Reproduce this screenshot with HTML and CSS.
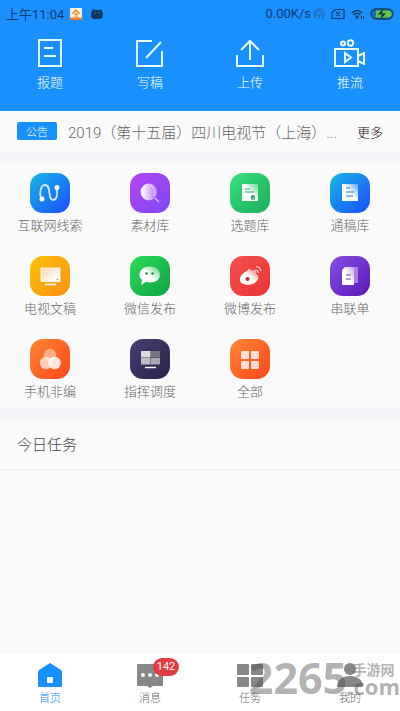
FILE: index.html
```html
<!DOCTYPE html>
<html lang="zh-CN">
<head>
    <meta charset="UTF-8">
    <meta name="viewport" content="width=device-width, initial-scale=1.0">
    <title>首页</title>
    <link rel="stylesheet" href="styles.css">
</head>
<body>
    <header class="header">
        <div class="status-bar">
            <span class="status-time">上午11:04</span>
            <svg width="12" height="12" viewBox="0 0 12 12"><rect width="12" height="12" rx="1" fill="#fdf0dc"/><path d="M2 6l4-4 4 4M4 6h4M5 8h3" fill="none" stroke="#e9963c" stroke-width="1.5"/><path d="M0 9.500h12V12H0z" fill="#f08030"/></svg>
            <svg class="status-android" width="14" height="12" viewBox="0 0 14 12"><path d="M2 3l1-2 2 1h4l2-1 1 2 1 3-1 4-3 1H4L1 9 1 5z" fill="#12365e"/><circle cx="5" cy="5" r=".7" fill="#1890ff"/><circle cx="9" cy="5" r=".7" fill="#1890ff"/></svg>
            <span class="status-speed">0.00K/s</span>
            <svg width="12" height="12" viewBox="0 0 12 12" fill="none" stroke="#235b98"><path d="M3.500 10.500a5 5 0 1 1 5 0M4 8a2.700 2.700 0 1 1 4 0M6 6v5"/></svg>
            <svg class="status-sim" width="14" height="12" viewBox="0 0 14 12" fill="none" stroke="#153b6b" stroke-width="1.200"><path d="M4 1.500h9v9H1v-6zM5 4l4 4M9 4L5 8"/></svg>
            <svg class="status-wifi" width="14" height="12" viewBox="0 0 14 12" fill="none" stroke="#153b6b" stroke-width="1.400"><path d="M1 5q5-5 10 0M2.500 7q3.500-3.500 7 0"/><circle cx="6" cy="9" r="1" fill="#153b6b"/><path d="M10.500 8v3M12.500 8v3" stroke-width="1"/></svg>
            <svg width="24" height="12" viewBox="0 0 24 12"><rect x="1" y="1" width="22" height="10" rx="5" fill="#1b6fc0" stroke="#173f66" stroke-width="1.300"/><path d="M6 2.500h12a3.500 3.500 0 0 1 0 7H6z" fill="#63c63c"/><path d="M13 1L8 6.500h4L10.500 11 16 5.500h-4z" fill="#102a48"/></svg>
        </div>
        <nav class="quick-nav">
            <a class="quick-item" href="#topic">
                <svg width="32" height="32" viewBox="0 0 32 32"><path d="M5 3h22v26H5zM10 11h9M10 19h12"/></svg>
                <span>报题</span>
            </a>
            <a class="quick-item" href="#write">
                <svg width="32" height="32" viewBox="0 0 32 32"><path d="M18 4H3v25h25V14M12 21L27 5"/></svg>
                <span>写稿</span>
            </a>
            <a class="quick-item" href="#upload">
                <svg width="32" height="32" viewBox="0 0 32 32"><path d="M3 18v11h26V18M16 23V4M7 13l9-9 9 9"/></svg>
                <span>上传</span>
            </a>
            <a class="quick-item" href="#stream">
                <svg width="32" height="32" viewBox="0 0 32 32"><path d="M1 12h23v17H1zM24 19l6-3v11l-6-3M11 16v9l6-4.500z"/><circle cx="9" cy="6.500" r="2"/><circle cx="16.500" cy="6" r="2.700"/></svg>
                <span>推流</span>
            </a>
        </nav>
    </header>

    <section class="notice">
        <span class="notice-tag">公告</span>
        <span class="notice-text">2019（第十五届）四川电视节（上海）...</span>
        <a class="notice-more" href="#more">更多</a>
    </section>

    <!-- gradients shared by the menu icons -->
    <svg class="defs" width="0" height="0" aria-hidden="true">
        <defs>
            <linearGradient id="fade" x1="0" y1="1" x2="1" y2="0"><stop offset=".5" stop-color="#fff"/><stop offset="1" stop-color="#fff" stop-opacity=".25"/></linearGradient>
            <linearGradient id="lens" x1="0" y1="0" x2="1" y2="0"><stop offset=".2" stop-color="#fff" stop-opacity=".9"/><stop offset="1" stop-color="#fff" stop-opacity=".2"/></linearGradient>
            <linearGradient id="screen" x1="0" y1="0" x2="1" y2="1"><stop offset="0" stop-color="#ffd9b0"/><stop offset=".3" stop-color="#ffe2c8"/><stop offset=".8" stop-color="#fff"/></linearGradient>
        </defs>
    </svg>

    <main>
        <section class="menu">
            <a class="menu-item" href="#clue">
                <svg class="menu-icon cyan-blue" viewBox="0 0 40 40"><path d="M12 26c-3-3-2-14 3-14 7 0 2 15 8 15 5 0 4-8 4-12" fill="none" stroke="#fff" stroke-opacity=".8" stroke-width="1.800"/><circle cx="12" cy="26" r="2.500" fill="#fff"/><circle cx="27" cy="14.500" r="2.500" fill="#fff"/></svg>
                <span>互联网线索</span>
            </a>
            <a class="menu-item" href="#material">
                <svg class="menu-icon purple" viewBox="0 0 40 40"><circle cx="19" cy="19" r="8.500" fill="url(#lens)"/><path d="M21 13a7 7 0 0 1 3 10M25 25l4 4" fill="none" stroke="#fff" stroke-opacity=".7" stroke-width="1.200"/></svg>
                <span>素材库</span>
            </a>
            <a class="menu-item" href="#topics">
                <svg class="menu-icon green" viewBox="0 0 40 40"><path d="M12 11h16v17H12z" fill="url(#fade)"/><path d="M15 16h5M15 19h9" stroke="#25a963"/><circle cx="23" cy="24.500" r="2.200" fill="#178d50"/><path d="M22 24.500l1 1 2-2" fill="none" stroke="#fff"/></svg>
                <span>选题库</span>
            </a>
            <a class="menu-item" href="#drafts">
                <svg class="menu-icon cyan-blue" viewBox="0 0 40 40"><path d="M12 11h16v17H12z" fill="url(#fade)"/><path d="M16 15h4M16 19h8M16 23h7" stroke="#237bdc" stroke-width="1.200"/></svg>
                <span>通稿库</span>
            </a>
            <a class="menu-item" href="#tv">
                <svg class="menu-icon yellow" viewBox="0 0 40 40"><rect x="11" y="12" width="19" height="13.500" fill="url(#screen)" stroke="#fff" stroke-width=".8"/><path d="M15 28.500h11" stroke="#fff" stroke-width="1.600"/><circle cx="27.500" cy="23.500" r=".7" fill="#c47400"/></svg>
                <span>电视文稿</span>
            </a>
            <a class="menu-item" href="#wechat">
                <svg class="menu-icon green-deep" viewBox="0 0 40 40"><path d="M20 10.500c6 0 10 3.500 10 8 0 5-4 8-10 8q-2 0-4-.7L11 29l1-5c-2-1.500-2.500-3-2.500-5.500 0-4.500 4.500-8 10.500-8z" fill="url(#fade)"/><circle cx="16.500" cy="17.500" r="1.200" fill="#138d38"/><circle cx="22.500" cy="17.500" r="1.200" fill="#138d38"/></svg>
                <span>微信发布</span>
            </a>
            <a class="menu-item" href="#weibo">
                <svg class="menu-icon red" viewBox="0 0 40 40"><path d="M17 15c2-3 4-3 4 0 4-2 6-1 5 3 3 1 3 5 1 7-5 5-15 5-17 0-1-4 3-8 7-10z" fill="url(#fade)"/><circle cx="17.500" cy="23" r="2" fill="#b32e30"/><path d="M25 14q3 0 3.500 3M26 10.500q4 .5 5 4.500" fill="none" stroke="#fff" stroke-opacity=".8" stroke-width="1.200"/></svg>
                <span>微博发布</span>
            </a>
            <a class="menu-item" href="#rundown">
                <svg class="menu-icon violet" viewBox="0 0 40 40"><path d="M15 11h13v16H15z" fill="#c7a4ef" fill-opacity=".7"/><path d="M12 14l3-3h9v18H12z" fill="url(#fade)"/><path d="M16 19h5M16 23h5" stroke="#6a3db8" stroke-width="1.200"/></svg>
                <span>串联单</span>
            </a>
            <a class="menu-item" href="#edit">
                <svg class="menu-icon orange" viewBox="0 0 40 40" fill="#fff"><circle cx="20" cy="16" r="6.200" fill-opacity=".45"/><circle cx="16" cy="24" r="6.200" fill-opacity=".65"/><circle cx="24.500" cy="24" r="6.200" fill-opacity=".85"/></svg>
                <span>手机非编</span>
            </a>
            <a class="menu-item" href="#dispatch">
                <svg class="menu-icon navy" viewBox="0 0 40 40"><path d="M11 12h9.500v6.500H11z" fill="#ddd"/><path d="M21 12h9v6.500h-9z" fill="#77747e"/><path d="M11 19h9.500v6.500H11z" fill="#c0bec5"/><path d="M21 19h9v6.500h-9z" fill="#aaa7b2"/><path d="M15 28.500h11" stroke="#fff" stroke-width="1.300"/></svg>
                <span>指挥调度</span>
            </a>
            <a class="menu-item" href="#all">
                <svg class="menu-icon orange" viewBox="0 0 40 40" fill="#fff" fill-opacity=".78"><rect x="11" y="12" width="8" height="8" rx="1"/><rect x="21" y="12" width="8" height="8" rx="1"/><rect x="11" y="22" width="8" height="8" rx="1"/><rect x="21" y="22" width="8" height="8" rx="1"/></svg>
                <span>全部</span>
            </a>
        </section>

        <section class="tasks">
            <h2>今日任务</h2>
        </section>
    </main>

    <footer class="tab-bar">
        <a class="tab active" href="#home">
            <svg width="28" height="28" viewBox="0 0 28 28"><path d="M14 2L3 9q-1 1-1 2v14q0 1 1 1h22q1 0 1-1V11q0-1-1-2z" fill="currentColor"/><rect x="11" y="16" width="6" height="6" rx="1" fill="#fff"/></svg>
            <span>首页</span>
        </a>
        <a class="tab" href="#message">
            <span class="tab-icon">
                <svg width="28" height="28" viewBox="0 0 28 28"><path d="M2 3h24q1 0 1 1v20q0 1-1 1h-9l-3 2-3-2H2q-1 0-1-1V4q0-1 1-1z" fill="#858789"/><g fill="#fff"><circle cx="7" cy="14" r="2"/><circle cx="14" cy="14" r="2"/><circle cx="21" cy="14" r="2"/></g></svg>
                <span class="badge">142</span>
            </span>
            <span>消息</span>
        </a>
        <a class="tab" href="#task">
            <svg width="28" height="28" viewBox="0 0 28 28" fill="#858789"><rect x="1" y="3" width="12" height="11" rx="1"/><rect x="15" y="3" width="12" height="11" rx="1"/><rect x="1" y="16" width="12" height="10" rx="1"/><rect x="15" y="16" width="12" height="10" rx="1"/></svg>
            <span>任务</span>
        </a>
        <a class="tab" href="#mine">
            <svg width="28" height="28" viewBox="0 0 28 28" fill="#858789"><circle cx="14" cy="8" r="6"/><path d="M1 26c0-7 5-11 13-11s13 4 13 11z"/></svg>
            <span>我的</span>
        </a>
        <div class="watermark">
            <span class="watermark-number">2265</span>
            <span class="watermark-side"><span>手游网</span><span class="watermark-com">.com</span></span>
        </div>
    </footer>
</body>
</html>
```
FILE: styles.css
```css
* {
    box-sizing: border-box;
}

body {
    display: flex;
    flex-direction: column;
    min-height: 100vh;
    margin: 0;
    background-color: #fafafa;
    color: #666;
    font-family: Roboto, "Noto Sans CJK SC", sans-serif;
    font-weight: 300;
}

a {
    color: inherit;
    text-decoration: none;
}

svg {
    display: block;
    flex-shrink: 0;
}

.defs {
    position: absolute;
}

/* header */
.header {
    padding-bottom: 18px;
    background-color: #1890ff;
}

.status-bar {
    display: flex;
    align-items: center;
    height: 27px;
    padding: 0 6px;
    color: #123b6d;
    font-size: 13px;
    font-weight: 400;
}

.status-time {
    margin-right: 6px;
}

.status-android {
    margin-left: 8px;
}

.status-speed {
    margin-left: auto;
    margin-right: 2px;
}

.status-sim {
    margin-left: 6px;
}

.status-wifi {
    margin: 0 5px 0 6px;
}

.quick-nav {
    display: grid;
    grid-template-columns: repeat(4, 1fr);
    padding-top: 10px;
}

.quick-item {
    display: flex;
    flex-direction: column;
    align-items: center;
    gap: 4px;
    color: #fff;
    font-size: 13px;
    line-height: 20px;
}

.quick-item svg {
    fill: none;
    stroke: #e8ffff;
    stroke-width: 2;
}

/* notice */
.notice {
    display: flex;
    align-items: center;
    height: 40px;
    padding: 0 17px;
    white-space: nowrap;
}

.notice-tag {
    width: 40px;
    margin-right: 11px;
    border-radius: 2px;
    background-color: #1890ff;
    color: #fff;
    font-family: "Noto Sans CJK SC", sans-serif;
    font-size: 11px;
    line-height: 18px;
    text-align: center;
}

.notice-text {
    flex: 1;
    overflow: hidden;
    font-size: 15px;
    text-overflow: ellipsis;
}

.notice-more {
    color: #111;
    font-size: 13px;
}

/* menu */
.menu {
    display: grid;
    grid-template-columns: repeat(4, 1fr);
    row-gap: 20px;
    padding: 10px 0 7px;
    border-top: 12px solid #f3f5f8;
    border-bottom: 12px solid #f3f5f8;
}

.menu-item {
    display: flex;
    flex-direction: column;
    align-items: center;
    gap: 3px;
    color: #666;
    font-size: 13px;
    line-height: 20px;
}

.menu-icon {
    width: 40px;
    height: 40px;
    border-radius: 13px;
}

.cyan-blue {
    background: linear-gradient(135deg, #18b6e6, #1b4dff);
}

.purple {
    background: linear-gradient(135deg, #b545ee, #7d47f8);
}

.green {
    background: linear-gradient(135deg, #35df7e, #1dae58);
}

.yellow {
    background: linear-gradient(135deg, #fdc30c, #ff8e12);
}

.green-deep {
    background: linear-gradient(135deg, #2edb58, #0da342);
}

.red {
    background: linear-gradient(135deg, #f6504e, #e83434);
}

.violet {
    background: linear-gradient(135deg, #8550e4, #5a18b6);
}

.orange {
    background: linear-gradient(135deg, #ff8636, #ff4618);
}

.navy {
    background: linear-gradient(135deg, #484073, #28234a);
}

/* tasks */
.tasks {
    border-bottom: 1px solid #eee;
}

.tasks h2 {
    margin: 0;
    padding: 0 17px;
    color: #444;
    font-size: 15px;
    font-weight: 300;
    line-height: 48px;
}

/* bottom tabs */
.tab-bar {
    display: grid;
    grid-template-columns: repeat(4, 1fr);
    position: relative;
    margin-top: auto;
    padding: 7px 0 4px;
    background-color: #fff;
}

.tab {
    display: flex;
    flex-direction: column;
    align-items: center;
    gap: 2px;
    color: #666;
    font-size: 11px;
    line-height: 16px;
}

.tab.active {
    color: #1890ff;
}

.tab-icon {
    position: relative;
}

.badge {
    position: absolute;
    top: -3px;
    left: 17px;
    width: 26px;
    border-radius: 9px;
    background-color: #e23c3f;
    color: #fff;
    font-size: 11px;
    font-weight: 400;
    line-height: 18px;
    text-align: center;
}

.watermark {
    display: flex;
    align-items: center;
    position: absolute;
    top: 4px;
    right: 0;
    color: rgba(80, 80, 80, 0.45);
    font-weight: 700;
    pointer-events: none;
}

.watermark-number {
    font-family: "Open Sans", sans-serif;
    font-size: 43px;
    line-height: 40px;
}

.watermark-side {
    display: flex;
    flex-direction: column;
    align-items: center;
    font-size: 14px;
    line-height: 16px;
}

.watermark-com {
    font-family: "Open Sans", sans-serif;
    font-size: 22px;
}
```
